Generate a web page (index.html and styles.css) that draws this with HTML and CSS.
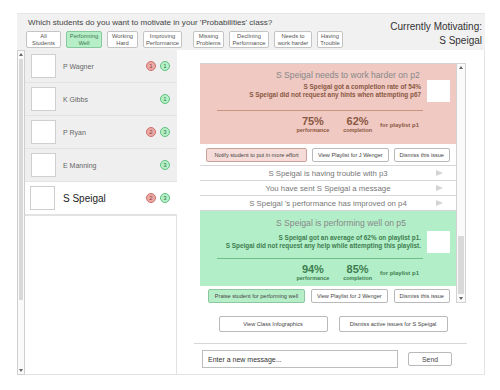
FILE: index.html
```html
<!DOCTYPE html>
<html lang="en-us">
<head>
    <meta charset="UTF-8">
    <meta name="viewport" content="width=device-width, initial-scale=1.0">
    <title>Motivate Students</title>
    <link rel="stylesheet" href="styles.css">
</head>
<body>
    <div class="app">
        <div class="top">
            <div class="ask">
                <p class="question">Which students do you want to motivate in your 'Probabilities' class?</p>
                <div class="filters">
                    <div class="group">
                        <span class="chip w35">All<br>Students</span>
                        <span class="chip w36 on">Performing<br>Well</span>
                        <span class="chip w31">Working<br>Hard</span>
                        <span class="chip w39">Improving<br>Performance</span>
                    </div>
                    <div class="group">
                        <span class="chip w31">Missing<br>Problems</span>
                        <span class="chip w40">Declining<br>Performance</span>
                        <span class="chip w38">Needs to<br>work harder</span>
                        <span class="chip w26">Having<br>Trouble</span>
                    </div>
                </div>
            </div>
            <div class="current">Currently Motivating:<br>S Speigal</div>
        </div>

        <div class="main">
            <div class="roster">
                <div class="vbar">
                    <span class="arrow up"></span>
                    <span class="thumb"></span>
                    <span class="arrow down"></span>
                </div>
                <div class="students">
                    <div class="student">
                        <span class="avatar"></span>
                        <span class="name">P Wagner</span>
                        <span class="badges"><i class="badge bad">1</i><i class="badge good">1</i></span>
                    </div>
                    <div class="student">
                        <span class="avatar"></span>
                        <span class="name">K Gibbs</span>
                        <span class="badges"><i class="badge good">1</i></span>
                    </div>
                    <div class="student">
                        <span class="avatar"></span>
                        <span class="name">P Ryan</span>
                        <span class="badges"><i class="badge bad">2</i><i class="badge good">3</i></span>
                    </div>
                    <div class="student">
                        <span class="avatar"></span>
                        <span class="name">E Manning</span>
                        <span class="badges"><i class="badge good">3</i></span>
                    </div>
                    <div class="student selected">
                        <span class="avatar"></span>
                        <span class="name">S Speigal</span>
                        <span class="badges"><i class="badge bad">2</i><i class="badge good">3</i></span>
                    </div>
                    <div class="empty"></div>
                </div>
            </div>

            <div class="detail">
                <div class="feed">
                    <div class="issues">
                        <div class="card red">
                            <p class="title">S Speigal needs to work harder on p2</p>
                            <div class="facts">
                                <p>S Speigal got a completion rate of 54%<br>S Speigal did not request any hints when attempting p67</p>
                                <span class="pic"></span>
                            </div>
                            <div class="rule"></div>
                            <div class="stats">
                                <div class="stat"><b>75%</b><small>performance</small></div>
                                <div class="stat"><b>62%</b><small>completion</small></div>
                                <span class="for">for playlist p1</span>
                            </div>
                        </div>
                        <div class="actions">
                            <span class="btn warn">Notify student to put in more effort</span>
                            <span class="btn">View Playlist for J Wenger</span>
                            <span class="btn">Dismiss this issue</span>
                        </div>
                        <div class="row">S Speigal is having trouble with p3<span class="tri"></span></div>
                        <div class="row">You have sent S Speigal a message<span class="tri"></span></div>
                        <div class="row">S Speigal 's performance has improved on p4<span class="tri"></span></div>
                        <div class="card green">
                            <p class="title">S Speigal is performing well on p5</p>
                            <div class="facts">
                                <p>S Speigal got an average of 62% on playlist p1.<br>S Speigal did not request any help while attempting this playlist.</p>
                                <span class="pic"></span>
                            </div>
                            <div class="rule"></div>
                            <div class="stats">
                                <div class="stat"><b>94%</b><small>performance</small></div>
                                <div class="stat"><b>85%</b><small>completion</small></div>
                                <span class="for">for playlist p1</span>
                            </div>
                        </div>
                        <div class="actions">
                            <span class="btn praise">Praise student for performing well</span>
                            <span class="btn">View Playlist for J Wenger</span>
                            <span class="btn">Dismiss this issue</span>
                        </div>
                    </div>
                    <div class="vbar small">
                        <span class="arrow up"></span>
                        <span class="thumb"></span>
                        <span class="arrow down"></span>
                    </div>
                </div>

                <div class="bulk">
                    <span class="btn wide">View Class Infographics</span>
                    <span class="btn wide">Dismiss active issues for S Speigal</span>
                </div>

                <div class="compose">
                    <div class="message">Enter a new message...</div>
                    <span class="btn send">Send</span>
                </div>
            </div>
        </div>
    </div>
</body>
</html>
```

FILE: styles.css
```css
* {
    margin: 0;
    padding: 0;
    box-sizing: border-box;
    font-family: "Liberation Sans", Arial, sans-serif;
}

body {
    background: white;
    color: #444;
}

.app {
    margin: 13px 0 0 17px;
    width: 468px;
}

/* header with filters */

.top {
    height: 37px;
    background: #f1f1f1;
    border-top: 1px solid #e6e6e6;
    display: flex;
    justify-content: space-between;
    padding: 0 3px 0 9px;
}

.question {
    font-size: 8.1px;
    line-height: 12px;
    color: #444;
    margin-top: 3px;
    padding-left: 2px;
}

.filters {
    display: flex;
    gap: 11px;
    margin-top: 2px;
}

.group {
    display: flex;
    gap: 5px;
}

.chip {
    height: 17px;
    background: white;
    border: 1px solid #c4c4c4;
    border-radius: 2px;
    font-size: 5.8px;
    line-height: 6.5px;
    text-align: center;
    color: #555;
    display: flex;
    align-items: center;
    justify-content: center;
}

.chip.on {
    background: #b6eec8;
    border-color: #86c99c;
    color: #3d7a50;
}

.w26 { width: 26px; }
.w31 { width: 31px; }
.w35 { width: 35px; }
.w36 { width: 36px; }
.w38 { width: 38px; }
.w39 { width: 39px; }
.w40 { width: 40px; }

.current {
    font-size: 10px;
    line-height: 14px;
    text-align: right;
    color: #333;
    padding-top: 6px;
}

/* main area */

.main {
    display: flex;
    height: 325px;
}

.roster {
    display: flex;
    width: 160px;
}

.vbar {
    width: 8px;
    background: #fafafa;
    border: 1px solid #cfcfcf;
    display: flex;
    flex-direction: column;
}

.vbar .thumb {
    background: #d9d9d9;
    margin: 0 1px;
}

.roster .vbar .thumb {
    margin-top: 1px;
    height: 241px;
}

.vbar .arrow {
    height: 7px;
    display: flex;
    align-items: center;
    justify-content: center;
}

.vbar .down {
    margin-top: auto;
}

.vbar .up::after, .vbar .down::after {
    content: "";
    border-left: 2px solid transparent;
    border-right: 2px solid transparent;
}

.vbar .up::after {
    border-bottom: 3px solid #666;
}

.vbar .down::after {
    border-top: 3px solid #666;
}

.students {
    flex: 1;
    display: flex;
    flex-direction: column;
}

.student {
    height: 33px;
    background: #efefef;
    border-bottom: 1px solid #e3e3e3;
    display: flex;
    align-items: center;
    padding: 0 7px 0 6px;
}

.avatar {
    width: 25px;
    height: 24px;
    background: white;
    border: 1px solid #cfcfcf;
}

.name {
    flex: 1;
    margin-left: 7px;
    font-size: 7px;
    color: #666;
}

.badges {
    display: flex;
    gap: 4px;
}

.badge {
    width: 10px;
    height: 10px;
    border-radius: 50%;
    font-style: normal;
    font-size: 6px;
    line-height: 8px;
    text-align: center;
    border: 1px solid;
}

.badge.bad {
    background: #eba9a6;
    border-color: #cf6f6a;
    color: #8a3a36;
}

.badge.good {
    background: #b6f0c8;
    border-color: #5fbf7e;
    color: #2f7545;
}

.student.selected {
    background: white;
    padding-left: 5px;
}

.student.selected .name {
    font-size: 10px;
    color: #222;
    margin-left: 8px;
}

.empty {
    flex: 1;
    border: 1px solid #e2e2e2;
    border-left: none;
}

/* notifications */

.detail {
    flex: 1;
    border-right: 1px solid #e4e4e4;
    border-bottom: 1px solid #e4e4e4;
    padding: 13px 18px 0 23px;
}

.feed {
    display: flex;
    height: 240px;
    border: 1px solid #d2d2d2;
    border-left: none;
}

.issues {
    flex: 1;
}

.vbar.small {
    border: none;
    border-left: 1px solid #d2d2d2;
    width: 9px;
}

.vbar.small .thumb {
    margin-top: 165px;
    height: 58px;
}

.card {
    padding-top: 6px;
    height: 80px;
}

.card.red {
    background: #efc9c2;
    color: #8b5843;
}

.card.green {
    background: #b2efc8;
    color: #3e7d50;
    height: 75px;
    padding-top: 7px;
}

.title {
    font-size: 8.6px;
    line-height: 10px;
    padding-left: 76px;
    color: #888;
}

.facts {
    display: flex;
    align-items: center;
    justify-content: flex-end;
    padding-right: 6px;
    margin-top: 0;
}

.green .facts {
    margin-top: 3px;
}

.facts p {
    font-size: 6.4px;
    line-height: 8px;
    font-weight: bold;
    text-align: right;
}

.pic {
    width: 23px;
    height: 22px;
    background: white;
    margin-left: 6px;
}

.rule {
    margin: 8px 33px 0 17px;
    border-top: 1px solid #c7947d;
}

.green .rule {
    margin-top: 5px;
    border-color: #6fbf86;
}

.stats {
    display: flex;
    justify-content: flex-end;
    align-items: center;
    gap: 14px;
    padding-right: 37px;
    margin-top: 5px;
}

.stat {
    display: flex;
    flex-direction: column;
    align-items: center;
}

.stat b {
    font-size: 11px;
    line-height: 11px;
}

.stat small {
    font-size: 5.4px;
    font-weight: bold;
}

.for {
    font-size: 6px;
    font-weight: bold;
    margin-left: -6px;
}

.actions {
    height: 22px;
    background: white;
    border-bottom: 1px solid #d6d6d6;
    display: flex;
    align-items: center;
    justify-content: space-between;
    padding: 0 6px;
}

.actions:last-child {
    height: 19px;
    border-bottom: none;
}

.btn {
    display: flex;
    align-items: center;
    justify-content: center;
    height: 14px;
    padding: 0 5px;
    background: white;
    border: 1px solid #b9b9b9;
    border-radius: 2px;
    font-size: 5.6px;
    color: #444;
}

.btn.warn {
    background: #f5dcd8;
    border-color: #c9a29c;
    width: 101px;
}

.btn.praise {
    background: #b6eec8;
    border-color: #8cc79f;
    width: 97px;
    margin-left: 2px;
}

.row {
    height: 15px;
    border-bottom: 1px solid #d6d6d6;
    background: white;
    display: flex;
    align-items: center;
    justify-content: center;
    position: relative;
    font-size: 7.8px;
    color: #777;
}

.tri {
    position: absolute;
    right: 13px;
    top: 4px;
    border-top: 3px solid transparent;
    border-bottom: 3px solid transparent;
    border-left: 7px solid #d4d4d4;
}

.bulk {
    display: flex;
    justify-content: center;
    gap: 11px;
    margin-top: 13px;
}

.btn.wide {
    width: 109px;
    height: 16px;
}

.compose {
    border-top: 1px solid #d6d6d6;
    margin: 11px -1px 0 -6px;
    padding: 6px 0 0 8px;
    display: flex;
    align-items: center;
}

.message {
    width: 196px;
    height: 18px;
    border: 1px solid #bdbdbd;
    font-size: 7px;
    color: #333;
    padding-left: 5px;
    display: flex;
    align-items: center;
}

.btn.send {
    width: 44px;
    margin-left: 10px;
    font-size: 6.8px;
}
```
